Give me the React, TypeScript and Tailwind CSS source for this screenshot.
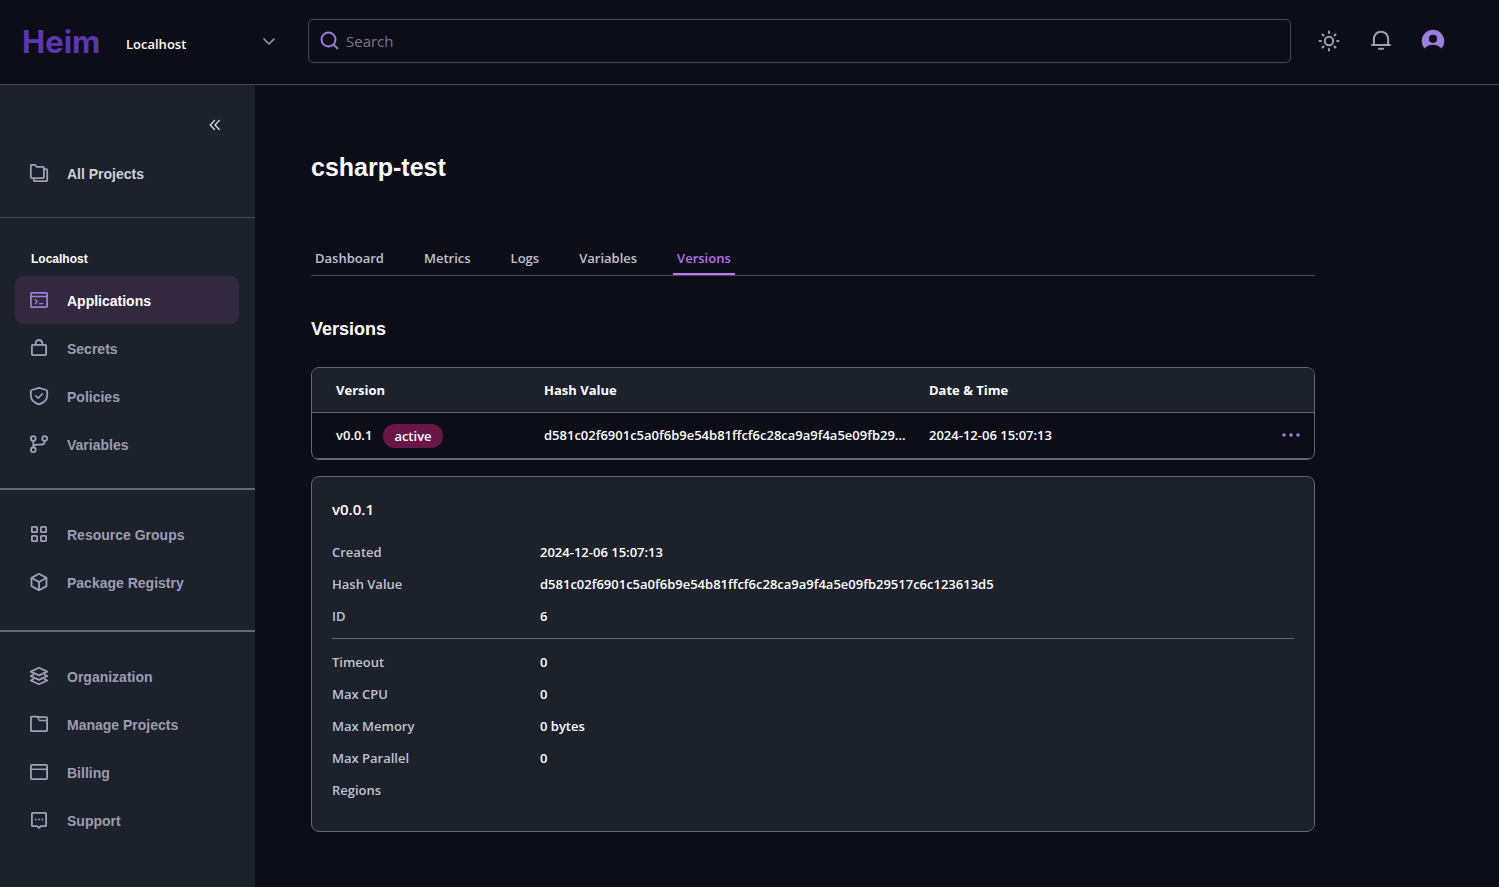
import type { ReactNode } from "react";

function Icon({ children }: { children: ReactNode }) {
  return (
    <svg
      viewBox="0 0 20 20"
      className="size-5 shrink-0"
      fill="none"
      stroke="currentColor"
      strokeWidth="1.8"
      strokeLinecap="round"
      strokeLinejoin="round"
      aria-hidden="true"
    >
      {children}
    </svg>
  );
}

const icons = {
  allProjects: (
    <>
      <path d="M1.8 2.9a1 1 0 0 1 1-1h3.2l1.8 1.9h6.1a1 1 0 0 1 1 1v9.3a1 1 0 0 1-1 1H2.8a1 1 0 0 1-1-1z" />
      <path d="M15.2 6.2h2a1 1 0 0 1 1 1v10a1 1 0 0 1-1 1H5.8a1 1 0 0 1-1-1v-1.6" />
    </>
  ),
  applications: (
    <>
      <rect x="1.9" y="2.9" width="16.2" height="14.2" rx=".8" />
      <path strokeWidth="1.3" d="M2 6.5h16" />
      <path strokeWidth="1.3" d="m6.4 9.7 1.9 1.9-1.9 1.9M10.7 13.7h3.2" />
    </>
  ),
  secrets: (
    <>
      <rect x="2.9" y="6.9" width="14.2" height="10.2" rx=".8" />
      <path d="M6.6 6.6V5.4a3.4 3.4 0 0 1 6.8 0v1.2" />
    </>
  ),
  policies: (
    <>
      <path d="M10 1.8 17.2 4c.6.2 1 .7 1 1.3V9.5c0 4.3-3.4 7.4-8.2 8.8-4.8-1.4-8.2-4.5-8.2-8.8V5.3c0-.6.4-1.1 1-1.3z" />
      <path strokeWidth="1.5" d="m6.6 9.8 2.6 2.3 4.3-4.3" />
    </>
  ),
  variables: (
    <>
      <circle cx="4.3" cy="4.5" r="2.4" />
      <circle cx="15.7" cy="4.5" r="2.4" />
      <circle cx="4.3" cy="15.7" r="2.4" />
      <path d="M4.3 7v6.2M15.7 7c0 2.4-1.2 3.6-3.6 3.6H8.6c-2.4 0-4.3.8-4.3 2.6" />
    </>
  ),
  groups: (
    <>
      <rect x="2.9" y="2.9" width="5.2" height="5.2" rx=".6" />
      <rect x="11.9" y="2.9" width="5.2" height="5.2" rx=".6" />
      <rect x="2.9" y="11.9" width="5.2" height="5.2" rx=".6" />
      <rect x="11.9" y="11.9" width="5.2" height="5.2" rx=".6" />
    </>
  ),
  registry: (
    <>
      <path d="m10 1.8 7.5 4.1v8.2L10 18.2l-7.500-4.100V5.900z" />
      <path d="m2.700 6 7.300 4 7.300-4M10 10v8" />
    </>
  ),
  organization: (
    <>
      <path d="m10 1.700 8.200 3.900L10 9.400 1.800 5.600z" />
      <path d="m4.200 8.900-2.400 1.200L10 13.900l8.200-3.800-2.400-1.200" />
      <path d="m4.200 13.300-2.400 1.200 8.200 3.800 8.200-3.800-2.400-1.200" />
    </>
  ),
  folder: (
    <>
      <path d="M1.900 3.600a.9.900 0 0 1 .9-.9h5.500l2 .5h6.900a.9.900 0 0 1 .9.900v12.100a.9.900 0 0 1-.9.900H2.800a.9.900 0 0 1-.9-.9z" />
      <path strokeWidth="1.500" d="M8.300 2.800c1 1 1 3.800 3.200 3.800H18" />
    </>
  ),
  billing: (
    <>
      <rect x="1.900" y="2.900" width="16.200" height="14.200" rx=".8" />
      <path strokeWidth="1.500" d="M2 7.300h16" />
    </>
  ),
  support: (
    <>
      <path d="M3.600 2.900h12.800a.7.700 0 0 1 .7.700v11.800a.7.700 0 0 1-.7.700h-4.600L10 18l-1.800-1.900H3.600a.7.700 0 0 1-.7-.7V3.600a.7.700 0 0 1 .7-.7z" />
      <path d="M6.700 9.500h.01M10 9.500h.01M13.300 9.500h.01" />
    </>
  ),
};

type ItemProps = { icon: keyof typeof icons; label: string; tone?: "active" | "bright" | "normal" };

const linkTone = {
  active: "bg-[#33293f] text-white",
  bright: "text-[#cfd0dd]",
  normal: "text-[#9c9cb1]",
};

function NavItem({ icon, label, tone = "normal" }: ItemProps) {
  return (
    <li>
      <a
        href="#"
        aria-current={tone === "active" ? "page" : undefined}
        className={`flex h-12 items-center gap-[18px] rounded-lg px-[14px] text-sm font-bold ${linkTone[tone]}`}
      >
        <span className={tone === "active" ? "text-[#9b7edb]" : "text-[#a0a0b4]"}>
          <Icon>{icons[icon]}</Icon>
        </span>
        <span className="pt-[2px]">{label}</span>
      </a>
    </li>
  );
}

function Header() {
  return (
    <header className="flex h-[85px] items-center border-b border-[#484855] pr-[54px] pb-[2px] pl-[22px]">
      <a href="#" className="w-[104px] pt-[2px] font-['Inter',sans-serif] text-[31px] leading-10 font-bold text-[#5d36b1]">
        Heim
      </a>
      <div className="relative mt-[6px] w-[150px]">
        <select
          aria-label="Project"
          className="w-full appearance-none bg-transparent text-[13px] leading-5 font-semibold text-white outline-none"
        >
          <option>Localhost</option>
        </select>
        <svg
          viewBox="0 0 12 8"
          className="pointer-events-none absolute top-1 right-px h-2 w-3"
          fill="none"
          stroke="#a0a0b4"
          strokeWidth="1.5"
          strokeLinecap="round"
          strokeLinejoin="round"
          aria-hidden="true"
        >
          <path d="m1 1 5 5 5-5" />
        </svg>
      </div>
      <label className="ml-8 flex h-11 flex-1 items-center gap-[6px] rounded-[5px] border border-[#484855] px-[11px]">
        <svg
          viewBox="0 0 20 20"
          className="size-5 shrink-0"
          fill="none"
          stroke="#9b7edb"
          strokeWidth="1.9"
          strokeLinecap="round"
          aria-hidden="true"
        >
          <circle cx="8.5" cy="8.5" r="7" />
          <path d="m13.7 13.7 3.7 3.7" />
        </svg>
        <input
          type="search"
          aria-label="Search"
          placeholder="Search"
          className="min-w-0 flex-1 bg-transparent text-[15px] leading-6 font-normal outline-none placeholder:text-[#77778a]"
        />
      </label>
      <div className="ml-[26px] flex items-center gap-7 text-[#a0a0b4]">
        <button type="button" aria-label="Toggle theme" className="size-6">
          <svg
            viewBox="0 0 24 24"
            className="size-6"
            fill="none"
            stroke="currentColor"
            strokeWidth="2"
            strokeLinecap="round"
            aria-hidden="true"
          >
            <circle cx="12" cy="12" r="4.2" />
            <path d="M12 2.5v1.4M12 20.1v1.4M2.5 12h1.4M20.1 12h1.4M5.5 5.5l1 1M17.5 17.5l1 1M5.5 18.5l1-1M17.5 6.5l1-1" />
          </svg>
        </button>
        <button type="button" aria-label="Notifications" className="size-6">
          <svg
            viewBox="0 0 24 24"
            className="size-6"
            fill="none"
            stroke="currentColor"
            strokeWidth="2"
            strokeLinecap="round"
            aria-hidden="true"
          >
            <path d="M4.9 15.5V9.8a7.1 7.1 0 0 1 14.2 0v5.7M3 15.9h18M9.9 19.8h4.2" />
          </svg>
        </button>
        <button type="button" aria-label="Account" className="size-6">
          <svg viewBox="0 0 24 24" className="size-6" aria-hidden="true">
            <path
              fill="#9b7edb"
              fillRule="evenodd"
              d="M3.5 19.6A11.3 11.3 0 1 1 20.5 19.6C18.5 17.2 15.5 15.7 12 15.7S5.5 17.2 3.5 19.6zM12 5.7a4.1 4.1 0 1 0 0 8.2 4.1 4.1 0 0 0 0-8.2z"
            />
          </svg>
        </button>
      </div>
    </header>
  );
}

function Sidebar() {
  return (
    <nav aria-label="Main" className="w-[255px] shrink-0 bg-[#1d212c] font-['Liberation_Sans',Arial,sans-serif]">
      <div className="border-b border-[#484855] pr-4 pb-5 pl-[15px]">
        <div className="flex h-16 items-center justify-end pt-4 pr-[18px]">
          <button type="button" aria-label="Collapse sidebar" className="size-3 text-[#cfd0dd]">
            <svg
              viewBox="0 0 12 12"
              className="size-3"
              fill="none"
              stroke="currentColor"
              strokeWidth="1.4"
              strokeLinecap="round"
              strokeLinejoin="round"
              aria-hidden="true"
            >
              <path d="M5.5 1.5 1.2 6l4.3 4.5M10.3 1.5 6 6l4.3 4.5" />
            </svg>
          </button>
        </div>
        <ul>
          <NavItem icon="allProjects" label="All Projects" tone="bright" />
        </ul>
      </div>
      <div className="border-b-2 border-[#65657b] pt-8 pr-4 pb-5 pl-[15px]">
        <h2 className="px-4 pb-2 text-xs leading-[18px] font-bold text-white">Localhost</h2>
        <ul>
          <NavItem icon="applications" label="Applications" tone="active" />
          <NavItem icon="secrets" label="Secrets" />
          <NavItem icon="policies" label="Policies" />
          <NavItem icon="variables" label="Variables" />
        </ul>
      </div>
      <ul className="border-b-2 border-[#65657b] pt-5 pr-4 pb-6 pl-[15px]">
        <NavItem icon="groups" label="Resource Groups" />
        <NavItem icon="registry" label="Package Registry" />
      </ul>
      <ul className="py-5 pr-4 pl-[15px]">
        <NavItem icon="organization" label="Organization" />
        <NavItem icon="folder" label="Manage Projects" />
        <NavItem icon="billing" label="Billing" />
        <NavItem icon="support" label="Support" />
      </ul>
    </nav>
  );
}

const tabs = ["Dashboard", "Metrics", "Logs", "Variables", "Versions"];
const hash = "d581c02f6901c5a0f6b9e54b81ffcf6c28ca9a9f4a5e09fb29517c6c123613d5";

function Details({ rows }: { rows: [string, string][] }) {
  return (
    <dl>
      {rows.map(([name, value]) => (
        <div key={name} className="flex leading-8">
          <dt className="w-52 shrink-0 text-[#bfc2d0]">{name}</dt>
          <dd className="text-white">{value}</dd>
        </div>
      ))}
    </dl>
  );
}

export default function App() {
  return (
    <div className="flex min-h-screen flex-col bg-[#0d0d18] font-['Open_Sans','Noto_Sans',sans-serif] text-[13px] font-semibold text-white">
      <Header />
      <div className="flex flex-1">
        <Sidebar />
        <main className="min-w-0 flex-1 px-14 pt-16 pb-14">
          <div className="max-w-[1004px]">
            <h1 className="font-['Liberation_Sans',Arial,sans-serif] text-[25px] leading-9 font-bold">csharp-test</h1>
            <div className="mt-[60px] flex gap-8 border-b border-[#484855]">
              {tabs.map((tab) => (
                <a
                  key={tab}
                  href="#"
                  aria-current={tab === "Versions" ? "page" : undefined}
                  className={`border-b-2 px-1 pt-[3px] pb-[5px] leading-5 ${
                    tab === "Versions" ? "border-[#c07af8] text-[#b573f0]" : "border-transparent text-[#bfc2d0]"
                  }`}
                >
                  {tab}
                </a>
              ))}
            </div>
            <h2 className="mt-10 font-['Liberation_Sans',Arial,sans-serif] text-lg leading-[26px] font-bold">Versions</h2>
            <div className="mt-[25px] overflow-hidden rounded-lg border border-[#65657b]">
              <table className="w-full table-fixed border-collapse text-left">
                <colgroup>
                  <col className="w-[232px]" />
                  <col className="w-[385px]" />
                  <col />
                  <col className="w-16" />
                </colgroup>
                <thead>
                  <tr className="h-11 border-b border-[#65657b] bg-[#1d212c]">
                    <th className="pt-[2px] pl-6 font-bold">Version</th>
                    <th className="pt-[2px] font-bold">Hash Value</th>
                    <th className="pt-[2px] font-bold">Date &amp; Time</th>
                    <th aria-label="Actions" />
                  </tr>
                </thead>
                <tbody>
                  <tr className="h-[46px] border-b border-[#65657b]">
                    <td className="pt-[2px] pl-6">
                      <div className="flex items-center gap-[11px]">
                        v0.0.1
                        <span className="rounded-full bg-[#6a1746] px-[11px] leading-6">active</span>
                      </div>
                    </td>
                    <td className="pt-[2px] whitespace-nowrap">{hash.slice(0, 50)}...</td>
                    <td className="pt-[2px]">2024-12-06 15:07:13</td>
                    <td>
                      <button type="button" aria-label="Row actions" className="mr-[13px] ml-auto block">
                        <svg viewBox="0 0 20 20" className="size-5" fill="#9b7edb" aria-hidden="true">
                          <circle cx="3" cy="10" r="1.8" />
                          <circle cx="10" cy="10" r="1.8" />
                          <circle cx="17" cy="10" r="1.8" />
                        </svg>
                      </button>
                    </td>
                  </tr>
                </tbody>
              </table>
            </div>
            <section className="mt-4 rounded-lg border border-[#65657b] bg-[#1d212c] px-5 pt-5 pb-[25px]">
              <h3 className="mb-[15px] text-[15px] leading-6">v0.0.1</h3>
              <Details
                rows={[
                  ["Created", "2024-12-06 15:07:13"],
                  ["Hash Value", hash],
                  ["ID", "6"],
                ]}
              />
              <hr className="mt-[6px] mb-[7px] border-[#65657b]" />
              <Details
                rows={[
                  ["Timeout", "0"],
                  ["Max CPU", "0"],
                  ["Max Memory", "0 bytes"],
                  ["Max Parallel", "0"],
                  ["Regions", ""],
                ]}
              />
            </section>
          </div>
        </main>
      </div>
    </div>
  );
}
